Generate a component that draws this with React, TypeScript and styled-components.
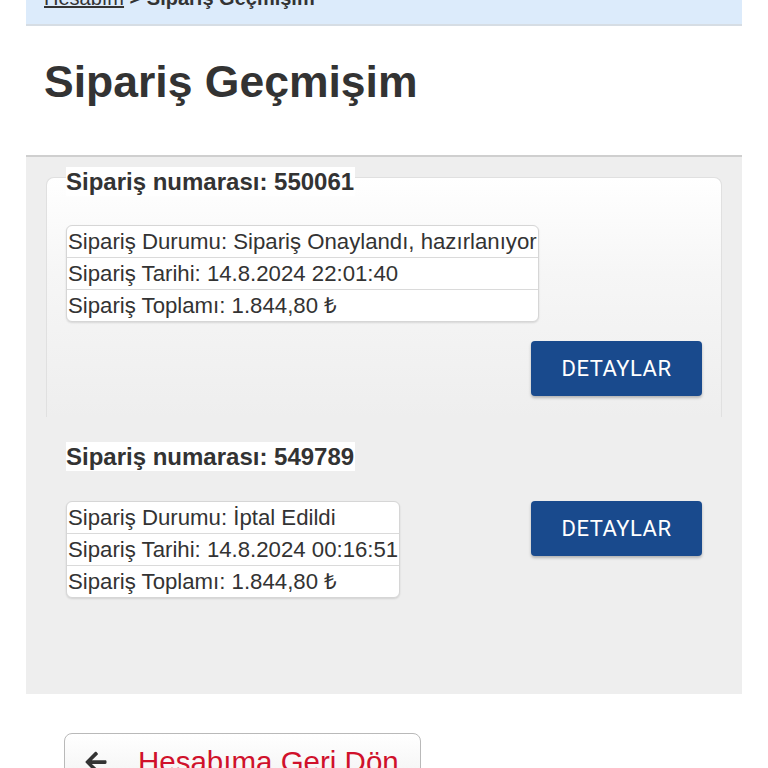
import React from 'react';
import styled, { createGlobalStyle } from 'styled-components';
import { FaArrowLeft } from 'react-icons/fa';

interface Order {
    id: string;
    status: string;
    date: string;
    total: string;
}

const orders: Order[] = [
    { id: '550061', status: 'Sipariş Onaylandı, hazırlanıyor', date: '14.8.2024 22:01:40', total: '1.844,80 ₺' },
    { id: '549789', status: 'İptal Edildi', date: '14.8.2024 00:16:51', total: '1.844,80 ₺' },
];

const GlobalStyle = createGlobalStyle`
    html, body {
        margin: 0;
        padding: 0;
        background: #fff;
        font-family: "Liberation Sans", Arial, Helvetica, sans-serif;
        color: #333;
    }
`;

const Page = styled.div`
    margin: 0 26px;
    overflow: hidden;
`;

const Breadcrumb = styled.nav`
    display: flex;
    align-items: flex-start;
    height: 24px;
    background-color: #dcebfb;
    border-bottom: 2px solid #d6dde4;
    padding: 0 18px;
    font-size: 20px;
`;

const Crumbs = styled.div`
    line-height: 20px;
    margin-top: -12px;
    white-space: nowrap;
`;

const CrumbLink = styled.a`
    color: #333;
    text-decoration: underline;
`;

const CrumbCurrent = styled.b`
    color: #333;
`;

const Title = styled.h1`
    margin: 30px 0 0;
    padding: 0 18px 47px;
    font-size: 44.5px;
    line-height: 52px;
    font-weight: bold;
    color: #333;
    border-bottom: 2px solid #cfcfcf;
`;

const Panel = styled.section`
    background-color: #eeeeee;
    padding: 20px 20px 75px;
    display: flex;
    flex-direction: column;
    gap: 24px;
`;

const Card = styled.div<{ $framed: boolean }>`
    border: 1px solid transparent;
    border-bottom: none;
    border-color: ${p => (p.$framed ? '#e0e0e0' : 'transparent')};
    border-radius: 8px 8px 0 0;
    background: ${p => (p.$framed ? 'linear-gradient(#ffffff 0%, #f6f6f6 40%, #eeeeee 100%)' : 'transparent')};
    padding: 0 19px 21px;
`;

const Legend = styled.div<{ $framed: boolean }>`
    display: table;
    margin-top: ${p => (p.$framed ? '-11px' : '0')};
    margin-bottom: ${p => (p.$framed ? '29px' : '30px')};
    padding: 0 1px 0 0;
    background-color: #fff;
    font-size: 24px;
    line-height: 29px;
    font-weight: bold;
    color: #333;
`;

const Body = styled.div`
    display: flex;
    flex-wrap: wrap;
    align-items: flex-start;
    row-gap: 19px;
`;

const InfoTable = styled.div`
    background-color: #fff;
    border: 1px solid #d6d6d6;
    border-radius: 6px;
    box-shadow: 0 1px 2px rgba(0, 0, 0, 0.12);
    overflow: hidden;
`;

const InfoRow = styled.div`
    padding: 0 1px;
    font-size: 22.2px;
    line-height: 31px;
    white-space: nowrap;
    color: #333;
    & + & {
        border-top: 1px solid #dadada;
    }
`;

const DetailButton = styled.button`
    margin-left: auto;
    width: 171px;
    height: 55px;
    border: none;
    border-radius: 4px;
    background-color: #194a8d;
    color: #fff;
    font-family: Roboto, "Liberation Sans", sans-serif;
    font-size: 22px;
    letter-spacing: 0.5px;
    box-shadow: 0 2px 3px rgba(0, 0, 0, 0.25);
    cursor: pointer;
`;

const Footer = styled.div`
    padding: 39px 38px 0;
`;

const BackButton = styled.button`
    display: flex;
    align-items: center;
    gap: 30px;
    width: 357px;
    height: 58px;
    padding: 0 19px;
    border: 1px solid #b9b9b9;
    border-radius: 8px;
    background: linear-gradient(#ffffff, #f1f1f1);
    font-family: "Liberation Sans", Arial, sans-serif;
    font-size: 29.5px;
    color: #d0112b;
    cursor: pointer;
`;

const ArrowIcon = styled(FaArrowLeft)`
    color: #333;
    flex-shrink: 0;
`;

const OrderCard: React.FC<{ order: Order; framed: boolean }> = ({ order, framed }) => (
    <Card $framed={framed}>
        <Legend $framed={framed}>Sipariş numarası: {order.id}</Legend>
        <Body>
            <InfoTable>
                <InfoRow>Sipariş Durumu: {order.status}</InfoRow>
                <InfoRow>Sipariş Tarihi: {order.date}</InfoRow>
                <InfoRow>Sipariş Toplamı: {order.total}</InfoRow>
            </InfoTable>
            <DetailButton>DETAYLAR</DetailButton>
        </Body>
    </Card>
);

const App: React.FC = () => {
    return (
        <>
            <GlobalStyle />
            <Page>
                <Breadcrumb>
                    <Crumbs>
                        <CrumbLink href="#">Hesabım</CrumbLink> <CrumbCurrent>&gt; Sipariş Geçmişim</CrumbCurrent>
                    </Crumbs>
                </Breadcrumb>
                <Title>Sipariş Geçmişim</Title>
                <Panel>
                    {orders.map((o, i) => (
                        <OrderCard key={o.id} order={o} framed={i === 0} />
                    ))}
                </Panel>
                <Footer>
                    <BackButton>
                        <ArrowIcon size={24} />
                        Hesabıma Geri Dön
                    </BackButton>
                </Footer>
            </Page>
        </>
    );
};

export default App;
